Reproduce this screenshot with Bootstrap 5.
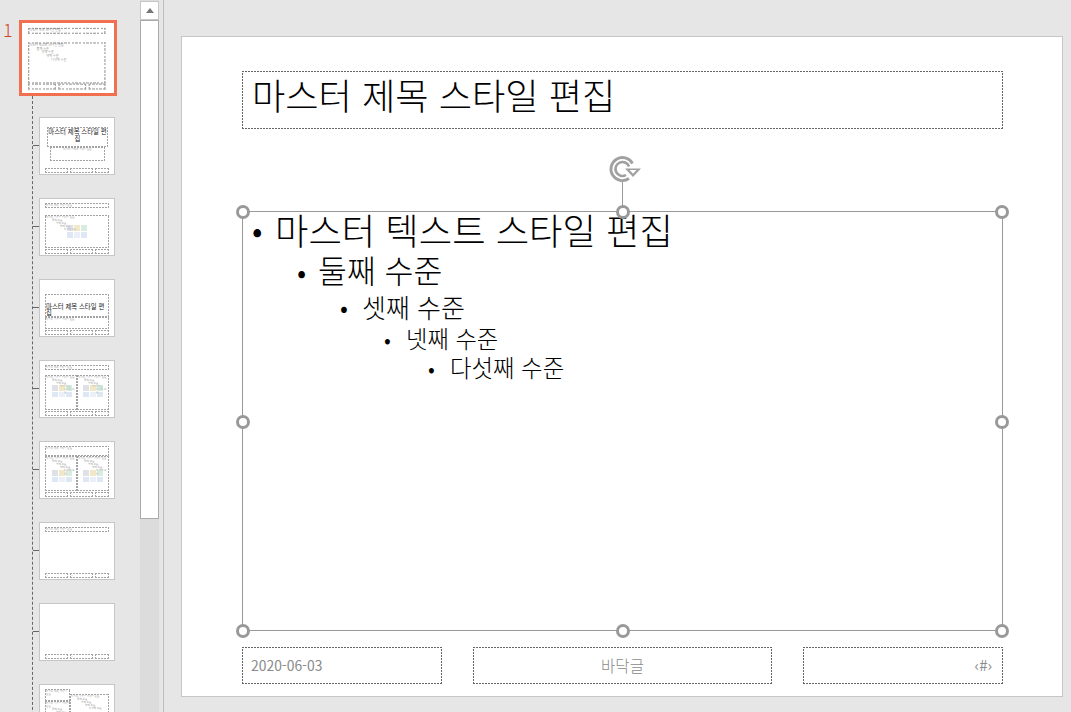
<!DOCTYPE html>
<html lang="ko">
<head>
  <meta charset="UTF-8" />
  <title>슬라이드 마스터</title>
  <link href="https://cdn.jsdelivr.net/npm/bootstrap@5.3.0/dist/css/bootstrap.min.css" rel="stylesheet" />
  <style>
    html, body { height: 712px; overflow: hidden; }
    body { background: #e6e6e6; font-family: "Noto Sans CJK KR", "Noto Sans", sans-serif; color: #000; font-weight: 300; }

    /* left thumbnail pane */
    .pane { width: 164px; height: 712px; border-right: 1px solid #bdbdbd; flex: none; overflow: hidden; }
    .thumb-col { width: 140px; flex: none; padding-top: 20px; }
    .master-row { height: 76px; }
    .slide-num { width: 19px; padding: 0 0 0 3px; font-size: 18px; line-height: 19px; color: #d24726; }
    .master-thumb { width: 98px; height: 76px; border: 3px solid #f0704f; background: #fff; }
    .master-thumb .mini { transform: scale(1.2105); transform-origin: 0 0; }
    .tree { margin-left: 32px; border-left: 1px dashed #666; padding-top: 21px; }
    .thumb-row { height: 81px; align-items: flex-start; }
    .branch { width: 6px; border-top: 1px dashed #666; margin-top: 28px; }
    .layout-thumb { width: 76px; height: 58px; border: 1px solid #c6c6c6; background: #fff; }
    .mini { position: relative; width: 74px; height: 56px; }
    .mini-box { position: absolute; font-size: 2.6px; line-height: 3px; color: #777; overflow: hidden; padding: 1px;
      --dash: #a3a3a3;
      background:
        repeating-linear-gradient(90deg, var(--dash) 0 2px, transparent 2px 3px) top / 100% 1px no-repeat,
        repeating-linear-gradient(90deg, var(--dash) 0 2px, transparent 2px 3px) bottom / 100% 1px no-repeat,
        repeating-linear-gradient(0deg, var(--dash) 0 2px, transparent 2px 3px) left / 1px 100% no-repeat,
        repeating-linear-gradient(0deg, var(--dash) 0 2px, transparent 2px 3px) right / 1px 100% no-repeat; }
    .mini-box.big { font-size: 6.4px; line-height: 6.6px; color: #222; text-align: center; padding: 2px 1px 0; font-weight: 400; }
    .mini-box.low { display: flex; align-items: flex-end; text-align: left; padding-bottom: 0; }
    .mini-l2 { padding-left: 6px; }
    .mini-l3 { padding-left: 10px; }
    .mini-l4 { padding-left: 14px; }
    .mini-l5 { padding-left: 18px; }
    .mini-pic { position: absolute; display: grid; grid-template-columns: repeat(3, 1fr); gap: 1px; opacity: .6; }
    .mini-pic i { display: block; }
    .mini-pic i:nth-child(1) { background: #c9ced6; }
    .mini-pic i:nth-child(2) { background: #e9d9a8; }
    .mini-pic i:nth-child(3) { background: #bfe0cc; }
    .mini-pic i:nth-child(4) { background: #c9d8ee; }
    .mini-pic i:nth-child(5) { background: #dde6f4; }
    .mini-pic i:nth-child(6) { background: #c9d8ee; }

    /* scrollbar */
    .scroll-strip { width: 19px; flex: none; background: #dcdcdc; height: 712px; }
    .scroll-btn { height: 19px; margin-top: 1px; background: #fff; border: 1px solid #c6c6c6; }
    .scroll-arrow { width: 0; height: 0; border-left: 4.5px solid transparent; border-right: 4.5px solid transparent; border-bottom: 5px solid #777; }
    .scroll-thumb { height: 499px; background: #fff; border: 1px solid #aaa; }

    /* slide canvas */
    .stage { padding: 36px 8px 0 17px; }
    .slide { position: relative; width: 882px; height: 661px; background: #fff; border: 1px solid #c6c6c6; }
    .holder { position: absolute;
      --dash: #666;
      background:
        repeating-linear-gradient(90deg, var(--dash) 0 2px, transparent 2px 3px) top / 100% 1px no-repeat,
        repeating-linear-gradient(90deg, var(--dash) 0 2px, transparent 2px 3px) bottom / 100% 1px no-repeat,
        repeating-linear-gradient(0deg, var(--dash) 0 2px, transparent 2px 3px) left / 1px 100% no-repeat,
        repeating-linear-gradient(0deg, var(--dash) 0 2px, transparent 2px 3px) right / 1px 100% no-repeat; }
    .title-box { left: 60px; top: 34px; width: 761px; height: 58px; font-size: 36.2px; line-height: 46px; padding: 0 0 0 10px; }
    .foot-box { top: 610px; height: 37px; font-size: 13.9px; font-weight: 400; color: #8a8a8a; line-height: 36px; padding: 0 9px; }
    .foot-date { left: 60px; width: 200px; }
    .foot-mid { left: 291px; width: 299px; text-align: center; font-size: 15.5px; font-weight: 300; }
    .foot-num { left: 621px; width: 200px; text-align: right; padding-right: 11px; font-size: 15px; }
    .body-box { position: absolute; left: 60px; top: 174px; width: 761px; height: 420px; border: 1px solid #999; }
    .lvl { position: absolute; white-space: nowrap; }
    .lvl::before { content: "•"; position: absolute; }
    .lvl1 { left: 32px; top: -3px; font-size: 36.3px; line-height: 40px; }
    .lvl1::before { left: -23px; font-size: 33px; }
    .lvl2 { left: 75px; top: 40px; font-size: 31.4px; line-height: 36px; }
    .lvl2::before { left: -21px; font-size: 29px; }
    .lvl3 { left: 119px; top: 78px; font-size: 26px; line-height: 33px; }
    .lvl3::before { left: -22px; font-size: 25px; }
    .lvl4 { left: 163px; top: 112px; font-size: 23.3px; line-height: 29px; }
    .lvl4::before { left: -22px; font-size: 21.5px; }
    .lvl5 { left: 207px; top: 141px; font-size: 23.4px; line-height: 29px; }
    .lvl5::before { left: -22px; font-size: 21.5px; }
    .grip { position: absolute; width: 14px; height: 14px; border-radius: 50%; background: #fff; border: 3px solid #999; margin: -7px 0 0 -7px; }
    .rot-line { position: absolute; left: 440px; top: 144px; height: 30px; width: 1px; background: #999; }
    .rot-icon { position: absolute; left: 426px; top: 117px; }
  </style>
</head>
<body>
<div class="d-flex">
  <!-- Thumbnail pane -->
  <div class="pane d-flex">
    <div class="thumb-col">
      <div class="master-row d-flex">
        <div class="slide-num">1</div>
        <div class="master-thumb"><div class="mini" id="masterMini"></div></div>
      </div>
      <div class="tree" id="layoutTree"></div>
    </div>
    <div class="scroll-strip">
      <div class="scroll-btn d-flex align-items-center justify-content-center"><div class="scroll-arrow"></div></div>
      <div class="scroll-thumb"></div>
    </div>
  </div>

  <!-- Slide -->
  <div class="stage">
    <div class="slide">
      <div class="holder title-box">마스터 제목 스타일 편집</div>
      <div class="rot-line"></div>
      <svg class="rot-icon" width="34" height="30" viewBox="0 0 34 30" fill="none" stroke="#a0a0a0">
        <path d="M24.5 9.5A11.5 11.5 0 1 0 21 24.5" stroke-width="2.8" />
        <path d="M21 12.5A7 7 0 1 0 18 21" stroke-width="2.6" />
        <path d="M17 14.5H33L25 23Z" fill="#a0a0a0" stroke="none" />
        <path d="M21.5 16H28.5L25 19.8Z" fill="#fff" stroke="none" />
      </svg>
      <div class="body-box">
        <div class="lvl lvl1">마스터 텍스트 스타일 편집</div>
        <div class="lvl lvl2">둘째 수준</div>
        <div class="lvl lvl3">셋째 수준</div>
        <div class="lvl lvl4">넷째 수준</div>
        <div class="lvl lvl5">다섯째 수준</div>
      </div>
      <div class="grip" style="left:61px;top:175px"></div>
      <div class="grip" style="left:441px;top:175px"></div>
      <div class="grip" style="left:820px;top:175px"></div>
      <div class="grip" style="left:61px;top:385px"></div>
      <div class="grip" style="left:820px;top:385px"></div>
      <div class="grip" style="left:61px;top:594px"></div>
      <div class="grip" style="left:441px;top:594px"></div>
      <div class="grip" style="left:820px;top:594px"></div>
      <div class="holder foot-box foot-date">2020-06-03</div>
      <div class="holder foot-box foot-mid">바닥글</div>
      <div class="holder foot-box foot-num">‹#›</div>
    </div>
  </div>
</div>

<script>
  const shortTitle = "마스터 제목 스타일 편집";
  const bodyText = '마스터 텍스트 스타일 편집<div class="mini-l2">둘째 수준</div><div class="mini-l3">셋째 수준</div><div class="mini-l4">넷째 수준</div><div class="mini-l5">다섯째 수준</div>';

  // footers are the same on every layout
  const footers = [[5, 50, 23, 5, "—"], [30, 50, 23, 5, "—"], [55, 50, 14, 5, ""]];
  const titleRow = [5, 4, 64, 5, shortTitle];

  // [x, y, w, h, html, extra class]; coordinates are inside the 74x56 thumbnail
  const layouts = [
    [[7, 9, 61, 20, shortTitle, "big"], [10, 29, 55, 14, '<div class="text-center">마스터 부제목 스타일 편집</div>']],
    [titleRow, [5, 16, 64, 33, bodyText], ["pic", 27, 26, 20, 13]],
    [[5, 14, 64, 23, shortTitle, "big low"], [5, 37, 64, 12, "마스터 텍스트 스타일 편집"]],
    [titleRow, [5, 14, 32, 35, bodyText], [37, 14, 32, 35, bodyText], ["pic", 12, 24, 20, 12], ["pic", 43, 24, 20, 12]],
    [[5, 4, 64, 10, shortTitle], [5, 14, 32, 35, bodyText], [37, 14, 32, 35, bodyText], ["pic", 12, 28, 20, 12], ["pic", 43, 28, 20, 12]],
    [titleRow],
    [],
    [[5, 4, 25, 12, shortTitle], [5, 16, 25, 33, bodyText], [30, 9, 39, 40, bodyText], ["pic", 38, 28, 22, 14]]
  ];

  function buildMini(target, boxes) {
    boxes.forEach((b) => {
      const el = document.createElement("div");
      if (b[0] === "pic") {
        el.className = "mini-pic";
        el.style.cssText = `left:${b[1]}px;top:${b[2]}px;width:${b[3]}px;height:${b[4]}px`;
        el.innerHTML = "<i></i><i></i><i></i><i></i><i></i><i></i>";
      } else {
        el.className = "mini-box " + (b[5] || "");
        el.style.cssText = `left:${b[0]}px;top:${b[1]}px;width:${b[2]}px;height:${b[3]}px`;
        el.innerHTML = b[4];
      }
      target.appendChild(el);
    });
  }

  // Master thumbnail
  buildMini(document.getElementById("masterMini"), [titleRow, [5, 16, 64, 34, bodyText], ...footers]);

  // Layout thumbnails hanging off the dashed line
  const tree = document.getElementById("layoutTree");
  layouts.forEach((boxes) => {
    const row = document.createElement("div");
    row.className = "thumb-row d-flex";
    row.innerHTML = '<div class="branch"></div><div class="layout-thumb"><div class="mini"></div></div>';
    buildMini(row.querySelector(".mini"), boxes.concat(footers));
    tree.appendChild(row);
  });
</script>
<script src="https://cdn.jsdelivr.net/npm/bootstrap@5.3.0/dist/js/bootstrap.bundle.min.js"></script>
</body>
</html>
